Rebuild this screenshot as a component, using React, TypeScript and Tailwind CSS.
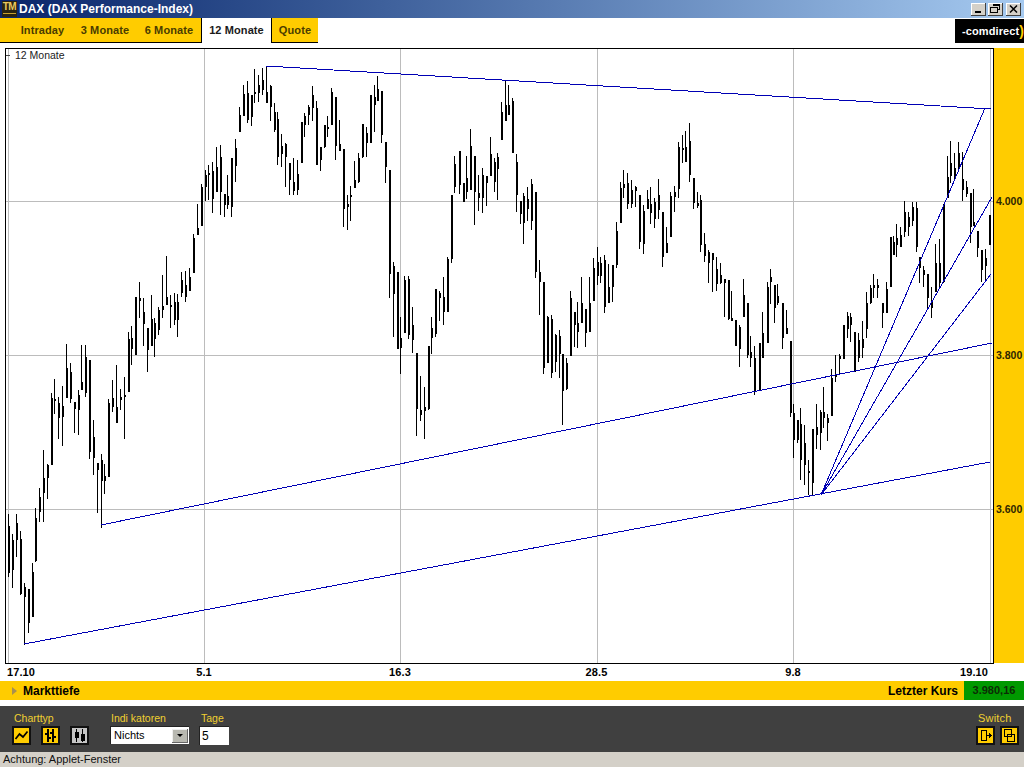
import { Fragment } from "react";

// x, high, low, body top, body bottom (page pixels)
const bars: number[][] = [
  [8,514,577,526,573],[12,534,588,540,570],[16,514,557,523,540],[20,531,595,539,594],[24,583,645,587,597],[28,589,633,589,623],[32,563,617,572,617],[35,508,562,518,561],[39,488,522,497,512],[43,450,522,478,493],[47,464,499,465,478],[51,393,465,398,465],[54,379,414,399,401],[58,397,439,403,418],[62,386,446,406,417],[66,344,398,368,398],[70,363,403,372,399],[74,402,433,402,409],[78,390,435,395,410],[81,345,390,382,390],[85,345,397,357,393],[89,360,459,360,452],[93,420,475,437,458],[97,463,513,463,470],[101,454,528,460,481],[104,464,494,476,481],[108,399,477,403,477],[112,380,412,398,407],[116,365,423,407,423],[120,389,410,397,400],[124,377,439,395,397],[128,332,392,339,392],[131,326,365,338,349],[135,297,355,297,355],[139,282,318,298,301],[143,298,346,312,324],[147,328,372,328,350],[151,295,346,319,346],[154,318,357,323,339],[158,307,335,310,330],[162,275,318,306,310],[166,256,305,297,305],[170,295,328,305,307],[174,293,325,302,320],[177,294,337,302,320],[181,272,297,280,293],[185,271,302,285,297],[189,268,291,277,291],[193,234,273,238,273],[197,204,235,228,235],[201,184,226,187,226],[205,170,201,175,187],[208,165,200,173,175],[212,162,213,171,199],[216,147,192,167,192],[220,145,215,157,192],[224,194,217,194,205],[227,175,209,196,205],[231,158,217,158,207],[235,139,182,148,166],[239,107,132,115,132],[243,85,116,94,116],[247,81,123,93,120],[251,95,126,95,117],[254,69,103,92,94],[258,75,102,85,93],
  [262,68,95,80,90],[266,66,103,92,103],[270,85,121,86,107],[274,103,132,112,130],[277,112,165,119,157],[281,134,167,146,154],[285,143,187,144,157],[289,163,195,163,180],[293,158,195,182,191],[297,160,195,174,190],[301,122,163,122,163],[304,113,137,116,125],[308,105,125,107,115],[312,86,121,95,108],[316,101,165,108,165],[320,147,171,147,160],[324,125,148,125,147],[327,116,137,127,129],[331,88,125,92,125],[335,97,160,97,146],[339,120,151,144,151],[343,149,227,149,209],[347,195,230,204,207],[350,186,221,195,197],[354,161,188,180,188],[358,153,183,158,182],[362,124,158,124,157],[366,127,157,133,143],[370,95,143,95,143],[374,85,132,97,105],[377,76,101,89,101],[381,91,143,91,135],[385,142,183,142,167],[389,170,298,170,274],[393,262,337,266,294],[397,272,349,272,349],[400,317,374,338,348],[404,276,333,280,333],[408,276,339,279,335],[412,307,353,325,340],[416,353,436,353,409],[420,376,421,410,415],[424,387,439,407,411],[428,346,410,346,409],[431,317,354,328,338],[435,289,337,289,334],[439,291,321,293,298],[443,277,325,297,312],[447,257,312,259,312],[451,195,263,195,259],[454,156,193,164,187],[459,151,194,151,185],[463,183,202,183,202],[466,156,199,178,192],[470,129,190,146,190],[474,156,225,156,192],[478,175,211,193,198],[482,168,213,175,198],[486,176,206,176,183],[490,137,176,154,176],[494,158,192,162,182],[497,153,200,157,169],[501,102,140,112,140],[505,81,121,105,121],[508,85,115,105,115],[512,98,153,101,153],[516,154,212,162,195],[520,201,224,201,214],[523,193,244,196,223],[527,187,221,199,209],[531,179,230,184,221],[535,192,278,192,272],[539,260,315,272,282],[543,282,374,282,368],[547,316,363,317,363],[551,315,378,319,373],[555,334,372,335,362],[559,330,378,336,354],[562,354,425,354,391],[566,358,390,363,389],[570,291,356,298,356],[574,312,347,312,325],[577,302,348,323,332],[581,277,323,303,323],[585,309,347,309,333],[589,277,332,303,332],[593,258,301,268,301],
  [597,247,285,262,276],[600,257,283,263,276],[604,255,313,260,307],[608,264,303,287,303],[612,265,302,265,287],[616,222,268,231,265],[620,182,223,188,223],[623,170,198,184,188],[627,173,209,183,204],[631,180,208,190,204],[635,186,207,187,191],[639,195,249,195,242],[643,205,254,211,244],[647,190,209,199,209],[650,187,224,204,213],[654,198,228,202,219],[658,179,219,195,210],[662,212,267,212,257],[666,227,253,243,253],[670,192,237,196,237],[674,186,212,192,197],[678,142,198,147,189],[682,135,163,148,150],[685,131,162,147,162],[689,123,182,141,175],[693,178,209,178,203],[697,192,208,203,206],[700,195,252,200,245],[704,233,262,244,256],[708,250,283,252,263],[712,253,292,253,260],[716,257,291,269,284],[720,263,284,275,283],[724,279,317,279,283],[728,280,320,280,319],[731,291,321,318,321],[735,320,346,320,346],[739,325,367,327,349],[743,279,317,295,317],[747,303,358,303,355],[750,336,367,352,358],[754,346,395,358,392],[759,343,390,343,390],[762,312,358,333,358],[767,282,343,287,343],[770,269,304,277,282],[774,285,323,285,308],[777,284,305,296,303],[782,303,349,303,338],[786,310,334,328,334],[790,341,417,341,413],[793,404,458,413,440],[797,420,443,420,440],[800,408,480,424,460],[804,425,485,443,465],[808,460,495,471,473],[812,429,495,429,483],[816,404,449,427,435],[820,410,450,412,433],[823,387,428,412,418],[827,414,441,418,423],[831,369,416,378,416],[835,355,382,375,377],[839,354,374,356,359],[843,325,359,325,359],[847,312,338,316,329],[850,313,342,317,325],[854,332,372,332,372],[858,333,362,340,358],[862,321,358,339,348],[866,292,338,303,329],[870,285,304,288,303],[873,274,298,285,288],[877,279,298,285,288],[882,303,328,303,313],[886,282,313,289,313],[890,237,287,237,287],[893,236,255,242,255],[896,224,257,238,245],[900,227,247,235,247],[904,201,237,212,232],[908,212,236,217,227],[912,202,226,207,221],[916,202,252,208,247],[919,257,283,257,268],[923,266,287,270,275],[927,274,310,274,298],[931,287,318,300,308],[935,244,292,263,292],[939,239,287,263,283],[943,204,283,204,282],[947,156,198,177,198],[950,141,183,163,176],[954,153,180,168,178],[958,142,170,153,168],[962,152,201,179,190],[966,181,197,187,194],[970,193,243,193,227],[973,189,226,222,226],[977,231,257,231,248],[981,250,282,250,270],[985,249,280,258,266],[989,215,245,215,245],
];

const trendLines = [
  [266, 66, 991, 109],
  [101, 525, 992, 343],
  [24, 644, 990, 462],
  [821, 495, 985, 108],
  [821, 495, 992, 197],
  [821, 495, 991, 274],
];

function PriceChart() {
  return (
    <svg width={987} height={614} viewBox="6 49 987 614" className="block" shapeRendering="crispEdges">
      {[8, 204, 400, 597, 793, 990].map((x) => (
        <rect key={x} x={x} y={49} width={1} height={614} fill="#bcbcbc" />
      ))}
      {[201, 355, 509].map((y) => (
        <rect key={y} x={6} y={y} width={987} height={1} fill="#bcbcbc" />
      ))}
      {bars.map(([x, hi, lo, top, bot]) => (
        <Fragment key={x}>
          <rect x={x} y={hi} width={1} height={lo - hi} fill="#000" />
          <rect x={x} y={top} width={2} height={bot - top} fill="#000" />
        </Fragment>
      ))}
      {trendLines.map(([x1, y1, x2, y2]) => (
        <line key={`${x1}-${y1}-${y2}`} x1={x1} y1={y1} x2={x2} y2={y2} stroke="#0000b4" strokeWidth={1} />
      ))}
    </svg>
  );
}

function Tab({ label, width, active }: { label: string; width: string; active?: boolean }) {
  return (
    <div
      className={`${width} flex items-center justify-center font-bold text-[11px] tracking-[0.1px] ${
        active
          ? "bg-white text-[#1a1a1a] border-l border-r border-black"
          : "bg-[#ffcc00] text-[#4a3c00] border-b border-black"
      }`}
    >
      {label}
    </div>
  );
}

function YellowButton({ children, grey }: { children: React.ReactNode; grey?: boolean }) {
  return (
    <div className={`w-[19px] h-[19px] border-2 border-[#111] flex items-center justify-center ${grey ? "bg-[#c4c4c4]" : "bg-[#ffcc00]"}`}>
      <svg width={15} height={15} viewBox="0 0 15 15" fill="none" stroke="#000" className="shrink-0" shapeRendering="crispEdges">
        {children}
      </svg>
    </div>
  );
}

export default function App() {
  return (
    <div className="w-[1024px] h-[768px] flex flex-col bg-white overflow-hidden font-['Liberation_Sans',Arial,sans-serif] text-black">
      {/* title bar */}
      <div className="h-[18px] flex items-center bg-gradient-to-r from-[#0a246a] to-[#a6caf0]">
        <div className="ml-[2px] w-[15px] h-[16px] bg-[#2a2410] flex items-start justify-center">
          <span className="text-[10px] leading-[12px] font-bold text-[#e8c860] tracking-[-0.5px] border-b border-[#c8a030]">TM</span>
        </div>
        <span className="ml-[2px] text-white font-bold text-[12px]">DAX (DAX Performance-Index)</span>
        <div className="ml-auto mr-[3px] flex gap-[2px]">
          <div className="w-[15px] h-[13px] bg-[#d4d0c8] border-r border-b border-[#404040] shadow-[inset_1px_1px_0_#fff] flex items-end justify-center pb-[2px]">
            <div className="w-[6px] h-[2px] bg-black" />
          </div>
          <div className="w-[15px] h-[13px] bg-[#d4d0c8] border-r border-b border-[#404040] shadow-[inset_1px_1px_0_#fff] flex items-center justify-center">
            <svg width={10} height={9} viewBox="0 0 10 9" fill="none" stroke="#000" shapeRendering="crispEdges">
              <path d="M3.5 2V.5h5.5V5.5H7.5M3 1h6" />
              <path d="M.5 3.5h6.5v5H.5zM.5 3h7" />
            </svg>
          </div>
          <div className="w-[15px] h-[13px] ml-[1px] bg-[#d4d0c8] border-r border-b border-[#404040] shadow-[inset_1px_1px_0_#fff] flex items-center justify-center">
            <svg width={9} height={8} viewBox="0 0 9 8" stroke="#000" strokeWidth={1.5}>
              <path d="M1 0.5 8 7.5M8 0.5 1 7.5" />
            </svg>
          </div>
        </div>
      </div>

      {/* tabs */}
      <div className="h-[25px] flex">
        <Tab label="Intraday" width="w-[73px] pl-[12px]" />
        <Tab label="3 Monate" width="w-[64px]" />
        <Tab label="6 Monate" width="w-[64px]" />
        <Tab label="12 Monate" width="w-[71px]" active />
        <Tab label="Quote" width="w-[46px]" />
        <div className="ml-auto mt-[1px] w-[69px] bg-black flex items-center pl-[7px] text-[11px] font-bold tracking-[0.1px] text-white whitespace-nowrap">
          -comdirect<span className="text-[#ffcc00] text-[14px] leading-none">)</span>
        </div>
      </div>

      {/* chart */}
      <div className="mt-[5px] h-[616px] flex">
        <div className="ml-[5px] w-[989px] h-[616px] border border-black relative">
          <PriceChart />
          <div className="absolute left-0 top-0 flex items-center text-[10.5px] leading-[12px] text-[#222]">
            <span className="w-[4px] h-[1px] bg-[#444] mr-[5px]" />
            12 Monate
          </div>
        </div>
        <div className="w-[30px] h-[615px] bg-[#ffcc00] pt-[147px] pl-[2px] flex flex-col text-[10.5px] font-bold text-[#2e2600]">
          <div className="h-[154px] leading-[12px]">4.000</div>
          <div className="h-[154px] leading-[12px]">3.800</div>
          <div className="h-[154px] leading-[12px]">3.600</div>
        </div>
      </div>

      {/* x axis */}
      <div className="h-[17px] flex items-center text-[11px] tracking-[0.1px] font-bold leading-none">
        <div className="w-[106px] pl-[7px]">17.10</div>
        <div className="w-[196px] text-center">5.1</div>
        <div className="w-[196px] text-center">16.3</div>
        <div className="w-[197px] text-center">28.5</div>
        <div className="w-[196px] text-center">9.8</div>
        <div className="flex-1 text-right pr-[36px]">19.10</div>
      </div>

      {/* info bar */}
      <div className="h-[19px] flex items-center bg-[#ffcc00] text-[12px] font-bold">
        <div className="ml-[12px] w-0 h-0 border-y-[4px] border-y-transparent border-l-[5px] border-l-[#a89050]" />
        <span className="ml-[6px]">Markttiefe</span>
        <span className="ml-auto mr-[6px]">Letzter Kurs</span>
        <div className="w-[60px] h-full bg-[#009900] flex items-center justify-center text-[#0c2c06] text-[11px]">3.980,16</div>
      </div>

      {/* controls */}
      <div className="mt-[6px] h-[46px] bg-[#404040] flex text-[10.5px] text-[#f0d030]">
        <div className="ml-[12px] pt-[5px] w-[98px]">
          <div className="ml-[2px] h-[15px] leading-[14px]">Charttyp</div>
          <div className="flex gap-[10px]">
            <YellowButton>
              <path d="M1.5 11 5.5 6 9 9 13.5 3.5" strokeWidth={1.7} shapeRendering="auto" />
            </YellowButton>
            <YellowButton>
              <path d="M5 1V14M10 1V14M2 6H5M5 10H8M7 5H10M10 9H13" strokeWidth={1.6} />
            </YellowButton>
            <YellowButton grey>
              <path d="M4.5 1V14M10.5 1V14" />
              <rect x={3} y={4} width={3} height={5} fill="#000" />
              <rect x={9} y={6} width={3} height={6} fill="#000" />
            </YellowButton>
          </div>
        </div>
        <div className="pt-[5px] w-[89px]">
          <div className="ml-[1px] h-[15px] leading-[14px]">Indi katoren</div>
          <div className="w-[79px] h-[18px] bg-white border-t border-l border-[#222] flex items-center text-[11px] text-black pl-[3px]">
            Nichts
            <div className="ml-auto mr-[1px] w-[16px] h-[14px] bg-[#b8b8b0] border-r border-b border-[#666] shadow-[inset_1px_1px_0_#eee] flex items-center justify-center">
              <div className="w-0 h-0 border-x-[3px] border-x-transparent border-t-[3px] border-t-black" />
            </div>
          </div>
        </div>
        <div className="pt-[5px]">
          <div className="ml-[2px] h-[15px] leading-[14px]">Tage</div>
          <div className="w-[30px] h-[19px] bg-white border-t border-l border-[#222] flex items-center pl-[2px] text-[12px] text-black">5</div>
        </div>
        <div className="ml-auto mr-[5px] pt-[5px]">
          <div className="ml-[2px] h-[15px] leading-[14px] text-[11px] tracking-[0.2px]">Switch</div>
          <div className="flex gap-[5px]">
            <YellowButton>
              <path d="M3.5 2.5H8.5V12.5H3.5ZM8 7.5H13M11 5.5 13 7.5 11 9.5" strokeWidth={1.5} />
            </YellowButton>
            <YellowButton>
              <path d="M2.5 1.5H9.5V8.5H2.5ZM5.5 6.5H12.5V13.5H5.5Z" strokeWidth={1.5} />
            </YellowButton>
          </div>
        </div>
      </div>

      {/* status bar */}
      <div className="h-[15px] bg-[#d4d0c8] pl-[3px] text-[11px] leading-[15px] text-[#111]">Achtung: Applet-Fenster</div>
    </div>
  );
}
